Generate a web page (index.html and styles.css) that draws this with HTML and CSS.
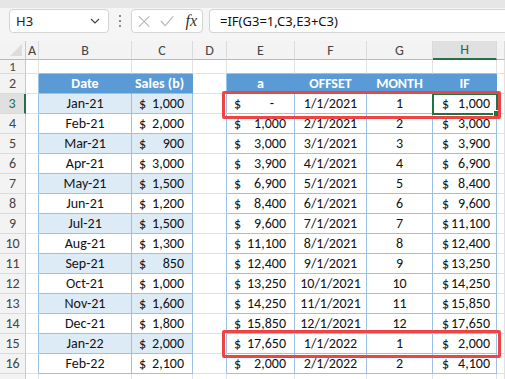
FILE: index.html
```html
<!DOCTYPE html>
<html>
<head>
<meta charset="utf-8">
<link rel="stylesheet" href="styles.css">
</head>
<body>
<div class="topstrip"></div>
<div class="fbar">
  <div class="namebox"><span>H3</span>
    <svg class="chev" width="10" height="6" viewBox="0 0 10 6"><path d="M1 1 L5 5 L9 1" fill="none" stroke="#444" stroke-width="1.2"/></svg>
  </div>
  <div class="dots"><i></i><i></i><i></i></div>
  <div class="fxbox">
    <svg width="13" height="13" viewBox="0 0 13 13"><path d="M1 1 L12 12 M12 1 L1 12" stroke="#b8b8b8" stroke-width="1.2" fill="none"/></svg>
    <svg width="15" height="12" viewBox="0 0 15 12"><path d="M1 6 L5.5 11 L14 1" stroke="#b8b8b8" stroke-width="1.2" fill="none"/></svg>
    <span class="fx">fx</span>
  </div>
  <div class="formula">=IF(G3=1,C3,E3+C3)</div>
</div>
<div class="sheet">
  <!-- column headers -->
  <div class="c corner"><span class="tri"></span></div>
  <div class="c hd">A</div><div class="c hd">B</div><div class="c hd">C</div><div class="c hd">D</div>
  <div class="c hd">E</div><div class="c hd">F</div><div class="c hd">G</div><div class="c hd hsel">H</div><div class="c hd"></div>
  <!-- row 1 -->
  <div class="c rh short">1</div><div class="c"></div><div class="c bb"></div><div class="c bb"></div><div class="c"></div>
  <div class="c bb"></div><div class="c bb"></div><div class="c bb"></div><div class="c bb"></div><div class="c"></div>
  <!-- row 2 -->
  <div class="c rh">2</div><div class="c bl"></div><div class="c th ctr">Date</div><div class="c th rt">Sales (b)</div><div class="c bl"></div>
  <div class="c th ctr">a</div><div class="c th ctr">OFFSET</div><div class="c th ctr">MONTH</div><div class="c th ctr">IF</div><div class="c"></div>
  <!-- row 3 -->
  <div class="c rh rsel">3</div><div class="c bl"></div><div class="c tb band ctr">Jan-21</div><div class="c tb band acc"><span>$</span><span>1,000</span></div><div class="c bl"></div>
  <div class="c tb acc"><span>$</span><span class="dash">-</span></div><div class="c tb ctr">1/1/2021</div><div class="c tb ctr">1</div><div class="c tb acc hacc"><span>$</span><span>1,000</span></div><div class="c"></div>
  <!-- row 4 -->
  <div class="c rh">4</div><div class="c bl"></div><div class="c tb ctr">Feb-21</div><div class="c tb acc"><span>$</span><span>2,000</span></div><div class="c bl"></div>
  <div class="c tb acc"><span>$</span><span>1,000</span></div><div class="c tb ctr">2/1/2021</div><div class="c tb ctr">2</div><div class="c tb acc hacc"><span>$</span><span>3,000</span></div><div class="c"></div>
  <!-- row 5 -->
  <div class="c rh">5</div><div class="c bl"></div><div class="c tb band ctr">Mar-21</div><div class="c tb band acc"><span>$</span><span>900</span></div><div class="c bl"></div>
  <div class="c tb acc"><span>$</span><span>3,000</span></div><div class="c tb ctr">3/1/2021</div><div class="c tb ctr">3</div><div class="c tb acc hacc"><span>$</span><span>3,900</span></div><div class="c"></div>
  <!-- row 6 -->
  <div class="c rh">6</div><div class="c bl"></div><div class="c tb ctr">Apr-21</div><div class="c tb acc"><span>$</span><span>3,000</span></div><div class="c bl"></div>
  <div class="c tb acc"><span>$</span><span>3,900</span></div><div class="c tb ctr">4/1/2021</div><div class="c tb ctr">4</div><div class="c tb acc hacc"><span>$</span><span>6,900</span></div><div class="c"></div>
  <!-- row 7 -->
  <div class="c rh">7</div><div class="c bl"></div><div class="c tb band ctr">May-21</div><div class="c tb band acc"><span>$</span><span>1,500</span></div><div class="c bl"></div>
  <div class="c tb acc"><span>$</span><span>6,900</span></div><div class="c tb ctr">5/1/2021</div><div class="c tb ctr">5</div><div class="c tb acc hacc"><span>$</span><span>8,400</span></div><div class="c"></div>
  <!-- row 8 -->
  <div class="c rh">8</div><div class="c bl"></div><div class="c tb ctr">Jun-21</div><div class="c tb acc"><span>$</span><span>1,200</span></div><div class="c bl"></div>
  <div class="c tb acc"><span>$</span><span>8,400</span></div><div class="c tb ctr">6/1/2021</div><div class="c tb ctr">6</div><div class="c tb acc hacc"><span>$</span><span>9,600</span></div><div class="c"></div>
  <!-- row 9 -->
  <div class="c rh">9</div><div class="c bl"></div><div class="c tb band ctr">Jul-21</div><div class="c tb band acc"><span>$</span><span>1,500</span></div><div class="c bl"></div>
  <div class="c tb acc"><span>$</span><span>9,600</span></div><div class="c tb ctr">7/1/2021</div><div class="c tb ctr">7</div><div class="c tb acc hacc"><span>$</span><span>11,100</span></div><div class="c"></div>
  <!-- row 10 -->
  <div class="c rh">10</div><div class="c bl"></div><div class="c tb ctr">Aug-21</div><div class="c tb acc"><span>$</span><span>1,300</span></div><div class="c bl"></div>
  <div class="c tb acc"><span>$</span><span>11,100</span></div><div class="c tb ctr">8/1/2021</div><div class="c tb ctr">8</div><div class="c tb acc hacc"><span>$</span><span>12,400</span></div><div class="c"></div>
  <!-- row 11 -->
  <div class="c rh">11</div><div class="c bl"></div><div class="c tb band ctr">Sep-21</div><div class="c tb band acc"><span>$</span><span>850</span></div><div class="c bl"></div>
  <div class="c tb acc"><span>$</span><span>12,400</span></div><div class="c tb ctr">9/1/2021</div><div class="c tb ctr">9</div><div class="c tb acc hacc"><span>$</span><span>13,250</span></div><div class="c"></div>
  <!-- row 12 -->
  <div class="c rh">12</div><div class="c bl"></div><div class="c tb ctr">Oct-21</div><div class="c tb acc"><span>$</span><span>1,000</span></div><div class="c bl"></div>
  <div class="c tb acc"><span>$</span><span>13,250</span></div><div class="c tb ctr">10/1/2021</div><div class="c tb ctr">10</div><div class="c tb acc hacc"><span>$</span><span>14,250</span></div><div class="c"></div>
  <!-- row 13 -->
  <div class="c rh">13</div><div class="c bl"></div><div class="c tb band ctr">Nov-21</div><div class="c tb band acc"><span>$</span><span>1,600</span></div><div class="c bl"></div>
  <div class="c tb acc"><span>$</span><span>14,250</span></div><div class="c tb ctr">11/1/2021</div><div class="c tb ctr">11</div><div class="c tb acc hacc"><span>$</span><span>15,850</span></div><div class="c"></div>
  <!-- row 14 -->
  <div class="c rh">14</div><div class="c bl"></div><div class="c tb ctr">Dec-21</div><div class="c tb acc"><span>$</span><span>1,800</span></div><div class="c bl"></div>
  <div class="c tb acc"><span>$</span><span>15,850</span></div><div class="c tb ctr">12/1/2021</div><div class="c tb ctr">12</div><div class="c tb acc hacc"><span>$</span><span>17,650</span></div><div class="c"></div>
  <!-- row 15 -->
  <div class="c rh">15</div><div class="c bl"></div><div class="c tb band ctr">Jan-22</div><div class="c tb band acc"><span>$</span><span>2,000</span></div><div class="c bl"></div>
  <div class="c tb acc"><span>$</span><span>17,650</span></div><div class="c tb ctr">1/1/2022</div><div class="c tb ctr">1</div><div class="c tb acc hacc"><span>$</span><span>2,000</span></div><div class="c"></div>
  <!-- row 16 -->
  <div class="c rh">16</div><div class="c bl"></div><div class="c tb ctr">Feb-22</div><div class="c tb acc"><span>$</span><span>2,100</span></div><div class="c bl"></div>
  <div class="c tb acc"><span>$</span><span>2,000</span></div><div class="c tb ctr">2/1/2022</div><div class="c tb ctr">2</div><div class="c tb acc hacc"><span>$</span><span>4,100</span></div><div class="c"></div>
  <!-- row 17 (partially visible, empty) -->
  <div class="c rh"></div><div class="c"></div><div class="c"></div><div class="c"></div><div class="c"></div>
  <div class="c"></div><div class="c"></div><div class="c"></div><div class="c"></div><div class="c"></div>

  <div class="selbox"><span class="handle"></span></div>
  <div class="redbox r1"></div>
  <div class="redbox r2"></div>
</div>
</body>
</html>
```

FILE: styles.css
```css
html, body {
  margin: 0;
  padding: 0;
}
body {
  width: 505px;
  height: 379px;
  overflow: hidden;
  background: #ffffff;
  font-family: "Carlito", "Lato", "Liberation Sans", sans-serif;
}
.topstrip {
  height: 8px;
  background: #e6e6e6;
}
.fbar {
  height: 33px;
  box-sizing: border-box;
  padding-top: 1px;
  background: #f5f5f5;
  display: flex;
  align-items: flex-start;
  font-family: "Noto Sans", "Open Sans", sans-serif;
  font-size: 13px;
  color: #222;
}
.namebox {
  margin-left: 9px;
  width: 100px;
  height: 24px;
  box-sizing: border-box;
  background: #fff;
  border: 1px solid #d4d4d4;
  border-radius: 4px;
  display: flex;
  align-items: center;
  justify-content: space-between;
  padding: 0 8px 0 6px;
}
.chev { display: block; }
.dots {
  width: 22px;
  height: 24px;
  display: flex;
  flex-direction: column;
  align-items: center;
  justify-content: center;
  gap: 3px;
}
.dots i {
  display: block;
  width: 2px;
  height: 2px;
  background: #8a8a8a;
}
.fxbox {
  width: 72px;
  height: 24px;
  box-sizing: border-box;
  background: #fff;
  border: 1px solid #d4d4d4;
  border-radius: 4px;
  display: flex;
  align-items: center;
  padding: 0 5px 0 6px;
  gap: 10px;
}
.fxbox svg { display: block; }
.fx {
  font-family: "Liberation Serif", "DejaVu Serif", serif;
  font-style: italic;
  font-size: 16px;
  color: #333;
  margin-left: 1px;
}
.formula {
  margin-left: 6px;
  flex: 1;
  height: 24px;
  box-sizing: border-box;
  background: #fff;
  border: 1px solid #d4d4d4;
  border-right: none;
  border-radius: 4px 0 0 4px;
  display: flex;
  align-items: center;
  padding-left: 10px;
  color: #111;
}

.sheet {
  position: relative;
  display: grid;
  grid-template-columns: 26px 13px 93px 61px 34px 68px 72px 66px 64px 8px;
  grid-template-rows: 19px 14px repeat(16, 20px);
  font-size: 14px;
  color: #111;
}
.c {
  box-sizing: border-box;
  border-right: 1px solid #e1e1e1;
  border-bottom: 1px solid #e1e1e1;
  display: flex;
  align-items: center;
  white-space: nowrap;
  overflow: hidden;
}
.corner {
  background: #f3f3f3;
  border-right-color: #c8c8c8;
  border-bottom-color: #b8b8b8;
  position: relative;
}
.tri {
  position: absolute;
  right: 3px;
  bottom: 3px;
  width: 0;
  height: 0;
  border-left: 12px solid transparent;
  border-bottom: 12px solid #dcdcdc;
}
.hd {
  background: #f3f3f3;
  border-right-color: #dadada;
  border-bottom-color: #b8b8b8;
  justify-content: center;
  color: #444;
  font-size: 14px;
}
.hsel {
  background: #e0e0e0;
  color: #1e6e3f;
  border-bottom: 2px solid #217346;
}
.rh {
  background: #f3f3f3;
  border-right-color: #c8c8c8;
  border-bottom-color: #dadada;
  justify-content: center;
  color: #444;
}
.short {
  line-height: 13px;
  font-size: 13px;
}
.rsel {
  background: #e0e0e0;
  color: #1e6e3f;
  border-right: 2px solid #217346;
}
.bl { border-right-color: #9bc2e6; }
.bb { border-bottom-color: #9bc2e6; }
.th {
  background: #5b9bd5;
  color: #fff;
  font-weight: bold;
  border-right-color: #5b9bd5;
  border-bottom-color: #9bc2e6;
}
.tb {
  border-right-color: #9bc2e6;
  border-bottom-color: #9bc2e6;
}
.band { background: #ddebf7; }
.ctr { justify-content: center; }
.rt { justify-content: flex-end; padding-right: 8px; }
.acc {
  justify-content: space-between;
  padding: 0 8px 0 7px;
}
.hacc { padding: 0 6px 0 9px; }
.dash { padding-right: 12px; }

.selbox {
  position: absolute;
  left: 432px;
  top: 52px;
  width: 66px;
  height: 22px;
  box-sizing: border-box;
  border: 2px solid #217346;
}
.handle {
  position: absolute;
  right: -5px;
  bottom: -5px;
  width: 6px;
  height: 6px;
  background: #217346;
  border: 1px solid #fff;
}
.redbox {
  position: absolute;
  left: 222px;
  width: 279px;
  height: 28px;
  box-sizing: border-box;
  border: 3px solid #ef4444;
  border-radius: 2px;
}
.r1 { top: 50px; }
.r2 { top: 289px; }
```
